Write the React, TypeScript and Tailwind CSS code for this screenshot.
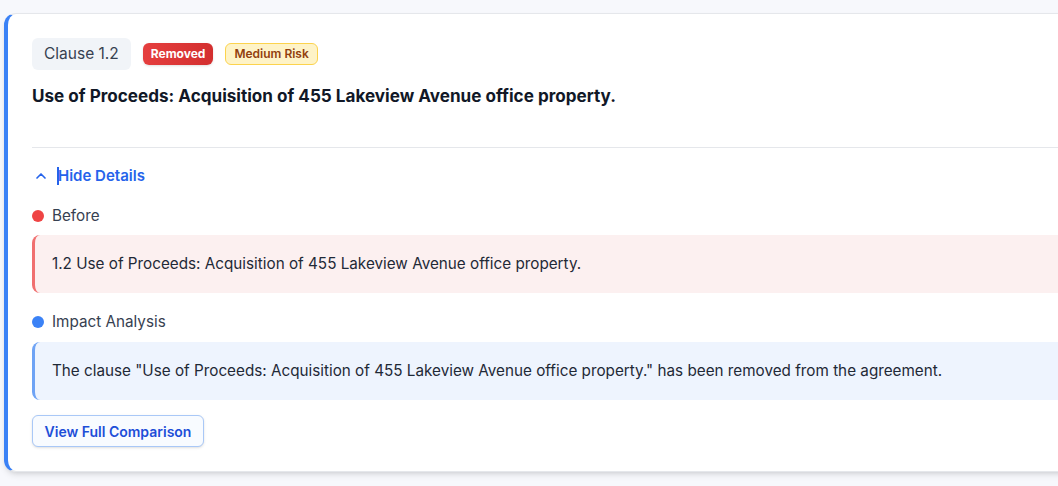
import { ChevronUp } from 'lucide-react';

export default function App() {
  return (
    <div
      className="w-[1058px] h-[486px] overflow-hidden bg-[#f7f8fc] pt-[13px] pl-[4px]"
      style={{ fontFamily: 'Inter, "Noto Sans", sans-serif' }}
    >
      <div className="w-[1100px] bg-white border border-[#e5e7eb] border-l-4 border-l-[#3b82f6] rounded-l-xl shadow-md">
        {/* Header */}
        <div className="pl-6 pt-6 pb-[37px]">
          <div className="flex items-center gap-3">
            <span className="h-8 px-3 flex items-center rounded-md bg-[#f1f4f8] text-[15.5px] text-[#374151]">
              Clause 1.2
            </span>
            <span className="h-[22px] px-2 flex items-center rounded-md bg-gradient-to-r from-[#e53e3e] to-[#d32f2f] text-white text-[12px] font-bold shadow-sm">
              Removed
            </span>
            <span className="h-[22px] px-2 flex items-center rounded-md bg-[#fef3c7] border border-[#fcd34d] text-[#92400e] text-[12px] font-semibold">
              Medium Risk
            </span>
          </div>
          <h2 className="mt-3 text-[17.1px] leading-7 font-bold text-[#111827]">
            Use of Proceeds: Acquisition of 455 Lakeview Avenue office property.
          </h2>
        </div>

        {/* Details */}
        <div className="ml-6 border-t border-[#e5e7eb] pt-4 pb-[24px]">
          <button className="flex items-center gap-2 h-6 text-[15px] font-semibold text-[#2563eb]">
            <ChevronUp className="w-4 h-4 ml-[1px]" strokeWidth={2.5} />
            <span className="flex items-center">
              <span className="w-[2px] h-[18px] bg-[#2563eb] mr-[-1px]" />
              Hide Details
            </span>
          </button>

          <div className="mt-4 flex items-center gap-2 h-6 text-[15.25px] text-[#374151]">
            <span className="w-3 h-3 rounded-full bg-[#ef4444]" />
            Before
          </div>
          <div className="mt-[7px] h-[58px] flex items-center pl-[17px] bg-[#fcf0f0] border-l-[3px] border-[#f07070] rounded-l-lg text-[15.25px] text-[#1f2937]">
            1.2 Use of Proceeds: Acquisition of 455 Lakeview Avenue office property.
          </div>

          <div className="mt-[17px] flex items-center gap-2 h-6 text-[15.25px] text-[#374151]">
            <span className="w-3 h-3 rounded-full bg-[#3b82f6]" />
            Impact Analysis
          </div>
          <div className="mt-2 h-[58px] flex items-center pl-[17px] bg-[#eef4fe] border-l-[3px] border-[#6ea3f5] rounded-l-lg text-[15.25px] text-[#1f2937]">
            The clause "Use of Proceeds: Acquisition of 455 Lakeview Avenue office property." has been removed from the agreement.
          </div>

          <button className="mt-[15px] h-8 w-[172px] flex items-center justify-center rounded-md border border-[#a9c8f7] bg-[#f8fbff] text-[14px] font-semibold text-[#1d4ed8] shadow-sm">
            View Full Comparison
          </button>
        </div>
      </div>
    </div>
  );
}
